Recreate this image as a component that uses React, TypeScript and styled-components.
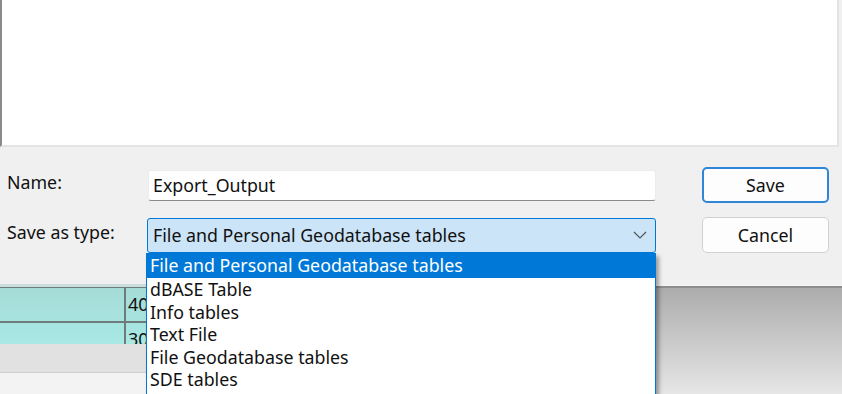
import styled, { createGlobalStyle } from 'styled-components'

const GlobalStyle = createGlobalStyle`
  html, body {
    margin: 0;
    padding: 0;
    background: #f3f3f3;
    overflow: hidden;
  }
  body {
    font-family: "Noto Sans", "Liberation Sans", sans-serif;
    color: #111;
  }
`

const fileTypes = [
  'File and Personal Geodatabase tables',
  'dBASE Table',
  'Info tables',
  'Text File',
  'File Geodatabase tables',
  'SDE tables',
]

function Chevron() {
  return (
    <svg width="14" height="8" viewBox="0 0 14 8">
      <path d="M1 1 L7 7 L13 1" fill="none" stroke="#555" strokeWidth="1.2" />
    </svg>
  )
}

function App() {
  return (
    <Page>
      <GlobalStyle />
      <Dialog>
        <FileList />
        <Form>
          <FormRow>
            <Label>Name:</Label>
            <NameInput type="text" defaultValue="Export_Output" />
            <Button $primary>Save</Button>
          </FormRow>
          <FormRow>
            <Label>Save as type:</Label>
            <SelectWrap>
              <SelectBox>
                <span>{fileTypes[0]}</span>
                <Chevron />
              </SelectBox>
              <OptionList>
                {fileTypes.map((t, i) => (
                  <Option key={t} $selected={i === 0}>
                    {t}
                  </Option>
                ))}
              </OptionList>
            </SelectWrap>
            <Button>Cancel</Button>
          </FormRow>
        </Form>
      </Dialog>
      <Backdrop>
        <TablePanel>
          <HeaderStrip />
          <TableRow $height={33}>
            <NameCell />
            <ValueCell>40</ValueCell>
          </TableRow>
          <TableRow $height={21} $light>
            <NameCell />
            <ValueCell>30</ValueCell>
          </TableRow>
          <ScrollBand />
          <BottomBar />
        </TablePanel>
        <Shadow />
      </Backdrop>
    </Page>
  )
}

const Page = styled.div`
  width: 842px;
  height: 394px;
  display: flex;
  flex-direction: column;
  overflow: hidden;
  font-size: 17.8px;
`

const Dialog = styled.div`
  height: 284px;
  flex: none;
  background: #f0f0f0;
  display: flex;
  flex-direction: column;
  position: relative;
  z-index: 1;
`

const FileList = styled.div`
  height: 147px;
  box-sizing: border-box;
  margin-right: 3px;
  background: #fff;
  border-left: 2px solid #8a8a8a;
  border-right: 2px solid #e4e4e4;
  border-bottom: 2px solid #e4e4e4;
`

const Form = styled.div`
  display: flex;
  flex-direction: column;
  gap: 14px;
  padding: 20px 0 0 7px;
`

const FormRow = styled.div`
  display: flex;
  align-items: center;
  height: 36px;
`

const Label = styled.div`
  width: 140px;
  flex: none;
  margin-top: -6px;
`

const NameInput = styled.input`
  width: 508px;
  height: 31px;
  box-sizing: border-box;
  margin: 0 0 0 1px;
  padding: 0 0 0 4px;
  border: 1px solid #ececec;
  border-bottom: 1px solid #8a8a8a;
  border-radius: 3px;
  background: #fff;
  font: inherit;
  color: #111;
  outline: none;
`

const SelectWrap = styled.div`
  position: relative;
  width: 509px;
  flex: none;
`

const SelectBox = styled.div`
  height: 35px;
  box-sizing: border-box;
  display: flex;
  align-items: center;
  justify-content: space-between;
  padding: 0 8px 0 5px;
  background: #cce4f7;
  border: 1px solid #0078d7;
  border-radius: 3px;
`

const OptionList = styled.div`
  position: absolute;
  left: -1px;
  top: 35px;
  width: 510px;
  height: 150px;
  box-sizing: border-box;
  background: #fff;
  border: 1px solid #0078d7;
  border-top: none;
  box-shadow: 3px 3px 4px rgba(0, 0, 0, 0.35);
`

const Option = styled.div<{ $selected?: boolean }>`
  height: ${(p) => (p.$selected ? '25.5px' : '22.6px')};
  line-height: ${(p) => (p.$selected ? '24px' : '22.6px')};
  padding-left: 3px;
  background: ${(p) => (p.$selected ? '#0078d7' : 'transparent')};
  color: ${(p) => (p.$selected ? '#fff' : '#111')};
`

const Button = styled.button<{ $primary?: boolean }>`
  width: 127px;
  height: 36px;
  margin-left: 46px;
  box-sizing: border-box;
  background: #fdfdfd;
  border: ${(p) => (p.$primary ? '2px solid #2f86d6' : '1px solid #d0d0d0')};
  border-radius: 5px;
  font: inherit;
  color: #111;
`

const Backdrop = styled.div`
  flex: 1;
  display: grid;
  grid-template-columns: 656px 1fr;
`

const TablePanel = styled.div`
  display: flex;
  flex-direction: column;
`

const HeaderStrip = styled.div`
  height: 3px;
  background: #c9dedd;
  border-bottom: 1px solid #6d7b7b;
`

const TableRow = styled.div<{ $height: number; $light?: boolean }>`
  height: ${(p) => p.$height}px;
  display: flex;
  border-bottom: ${(p) => (p.$light ? 'none' : '2px solid #6d7b7b')};
  background: ${(p) =>
    p.$light
      ? 'linear-gradient(#a6e4e0, #aae8e5)'
      : 'linear-gradient(#a5dcd8, #a8e2de)'};
`

const NameCell = styled.div`
  width: 124px;
  border-right: 2px solid #6d7b7b;
`

const ValueCell = styled.div`
  flex: 1;
  padding: 5px 0 0 2px;
  font-size: 18px;
  line-height: 22px;
`

const ScrollBand = styled.div`
  height: 28px;
  background: #e1e1e1;
  border-bottom: 1px solid #cfcfcf;
`

const BottomBar = styled.div`
  flex: 1;
  background: #f3f3f3;
`

const Shadow = styled.div`
  border-top: 2px solid #8e8e8e;
  margin-top: 2px;
  background: linear-gradient(#acacac, #e6e6e6);
`

export default App
